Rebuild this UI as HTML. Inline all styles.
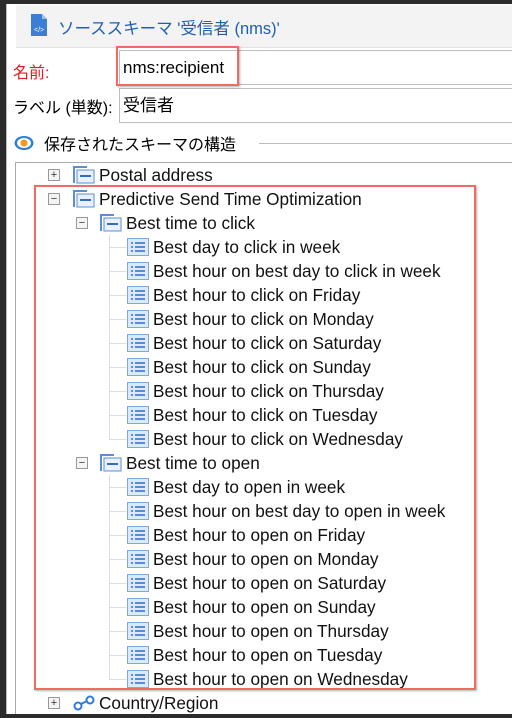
<!DOCTYPE html>
<html><head><meta charset="utf-8"><style>
body{margin:0;width:512px;height:718px;overflow:hidden;background:#2b2b2b;position:relative;font-family:"Segoe UI","Liberation Sans","Noto Sans CJK JP",sans-serif;}
.win{position:absolute;left:6px;top:4px;right:0;bottom:4px;background:#fff;border-left:1px solid #bbb;}
.hdr{position:absolute;left:9px;top:1px;right:0;height:42px;background:#f3f3f3;border-bottom:1px solid #e2e2e2;}
.ttl{position:absolute;left:42px;top:10px;font-size:16.5px;color:#1f5fae;white-space:nowrap;}
.lbl{position:absolute;font-size:16px;white-space:nowrap;}
.inp{position:absolute;left:112px;right:0;height:33px;border:1px solid #bdbdbd;border-right:none;font-size:17px;line-height:33px;padding-left:3px;white-space:nowrap;}
.red{position:absolute;border:2px solid #f06b63;box-shadow:1px 1px 2px rgba(0,0,0,.3);}
.sec{position:absolute;left:37px;top:127px;font-size:16px;}
.line{position:absolute;left:252px;right:0;top:139px;border-top:1px solid #bbb;}
.tree{position:absolute;left:8px;top:158px;right:0;bottom:0;border-left:1px solid #aaa;border-top:1px solid #aaa;}
.row{position:absolute;height:24px;font-size:17.2px;line-height:24px;white-space:nowrap;color:#111;}
.pm{position:absolute;width:10px;height:10px;border:1px solid #999;background:#f4f4f4;font-size:11px;line-height:10px;text-align:center;color:#333;}
</style></head><body>
<div class="win">
<div class="hdr">
<svg style="position:absolute;left:15px;top:9px" width="16" height="22" viewBox="0 0 16 22"><path d="M0 0h11l5 5v17H0z" fill="#3b7ed6"/><path d="M11 0v5h5" fill="#9cc3ef"/><text x="3" y="18" font-size="7" fill="#fff" font-family="Liberation Sans">&lt;/&gt;</text></svg>
<div class="ttl">ソーススキーマ '受信者 (nms)'</div>
</div>
<div class="lbl" style="left:6px;top:55px;color:#e02020">名前:</div>
<div class="inp" style="top:46px">nms:recipient</div>
<div class="lbl" style="left:6px;top:90px">ラベル (単数):</div>
<div class="inp" style="top:84px">受信者</div>
<svg style="position:absolute;left:7px;top:129px" width="20" height="20" viewBox="0 0 20 20"><ellipse cx="10" cy="10" rx="9.5" ry="7" fill="#2a7fd4"/><ellipse cx="10" cy="10" rx="7" ry="5" fill="#fff"/><circle cx="10" cy="10" r="3.5" fill="#f39a1e"/></svg>
<div class="sec">保存されたスキーマの構造</div>
<div class="line"></div>
<div class="tree"></div>
</div>
<div id="t"></div>
<div class="red" style="left:116px;top:46px;width:119px;height:36px"></div>
<div class="red" style="left:34px;top:185px;width:438px;height:501px"></div>
<script>
var T=document.getElementById('t');var h='';
function grp(x){return '<svg style="position:absolute;left:'+x+'px;top:3px" width="22" height="18" viewBox="0 0 22 18"><path d="M1 17V1h13" fill="none" stroke="#5a8fd6" stroke-width="2"/><rect x="4" y="4" width="17" height="13" fill="#e8f1fc" stroke="#5a8fd6"/><path d="M7 10h11" stroke="#2f6ec4" stroke-width="2"/></svg>';}
function leaf(x){return '<svg style="position:absolute;left:'+x+'px;top:3px" width="22" height="18" viewBox="0 0 22 18"><rect x="0.5" y="0.5" width="21" height="17" fill="#dbe9fa" stroke="#7fa9dd"/><path d="M4 5h2M4 9h2M4 13h2M8 5h10M8 9h10M8 13h10" stroke="#2f6ec4" stroke-width="1.5"/></svg>';}
function pm(x,c){return '<div class="pm" style="left:'+x+'px;top:6px">'+c+'</div>';}
var rows=[[0,'Postal address','+','g'],[0,'Predictive Send Time Optimization','−','g'],[1,'Best time to click','−','g']];
var d=['Friday','Monday','Saturday','Sunday','Thursday','Tuesday','Wednesday'];
['click','open'].forEach(function(a,i){
 if(i==1)rows.push([1,'Best time to open','−','g']);
 rows.push([2,'Best day to '+a+' in week']);
 rows.push([2,'Best hour on best day to '+a+' in week']);
 d.forEach(function(z){rows.push([2,'Best hour to '+a+' on '+z]);});
});
rows.push([0,'Country/Region','+','c']);
rows.forEach(function(r,k){
 var top=163+24*k,l=r[0],s='';
 if(l==0){s+=pm(48,r[2]);s+=r[3]=='c'?'<svg style="position:absolute;left:73px;top:4px" width="22" height="16" viewBox="0 0 22 16"><circle cx="5" cy="11" r="3.5" fill="none" stroke="#2f7ad6" stroke-width="2"/><circle cx="17" cy="5" r="3.5" fill="none" stroke="#2f7ad6" stroke-width="2"/><path d="M8 9l6-3" stroke="#2f7ad6" stroke-width="2"/></svg>':grp(73);s+='<span style="position:absolute;left:99px">'+r[1]+'</span>';}
 else if(l==1){s+=pm(76,r[2])+grp(100)+'<span style="position:absolute;left:126px">'+r[1]+'</span>';}
 else{s+='<div style="position:absolute;left:109px;top:12px;width:17px;border-top:1px solid #ddd"></div>'+leaf(127)+'<span style="position:absolute;left:153px">'+r[1]+'</span>';}
 h+='<div class="row" style="left:0;top:'+top+'px;width:512px">'+s+'</div>';
});
h+='<div style="position:absolute;left:109px;top:235px;height:204px;border-left:1px solid #ddd"></div>';
h+='<div style="position:absolute;left:109px;top:475px;height:204px;border-left:1px solid #ddd"></div>';
T.innerHTML=h;
</script>
</body></html>
